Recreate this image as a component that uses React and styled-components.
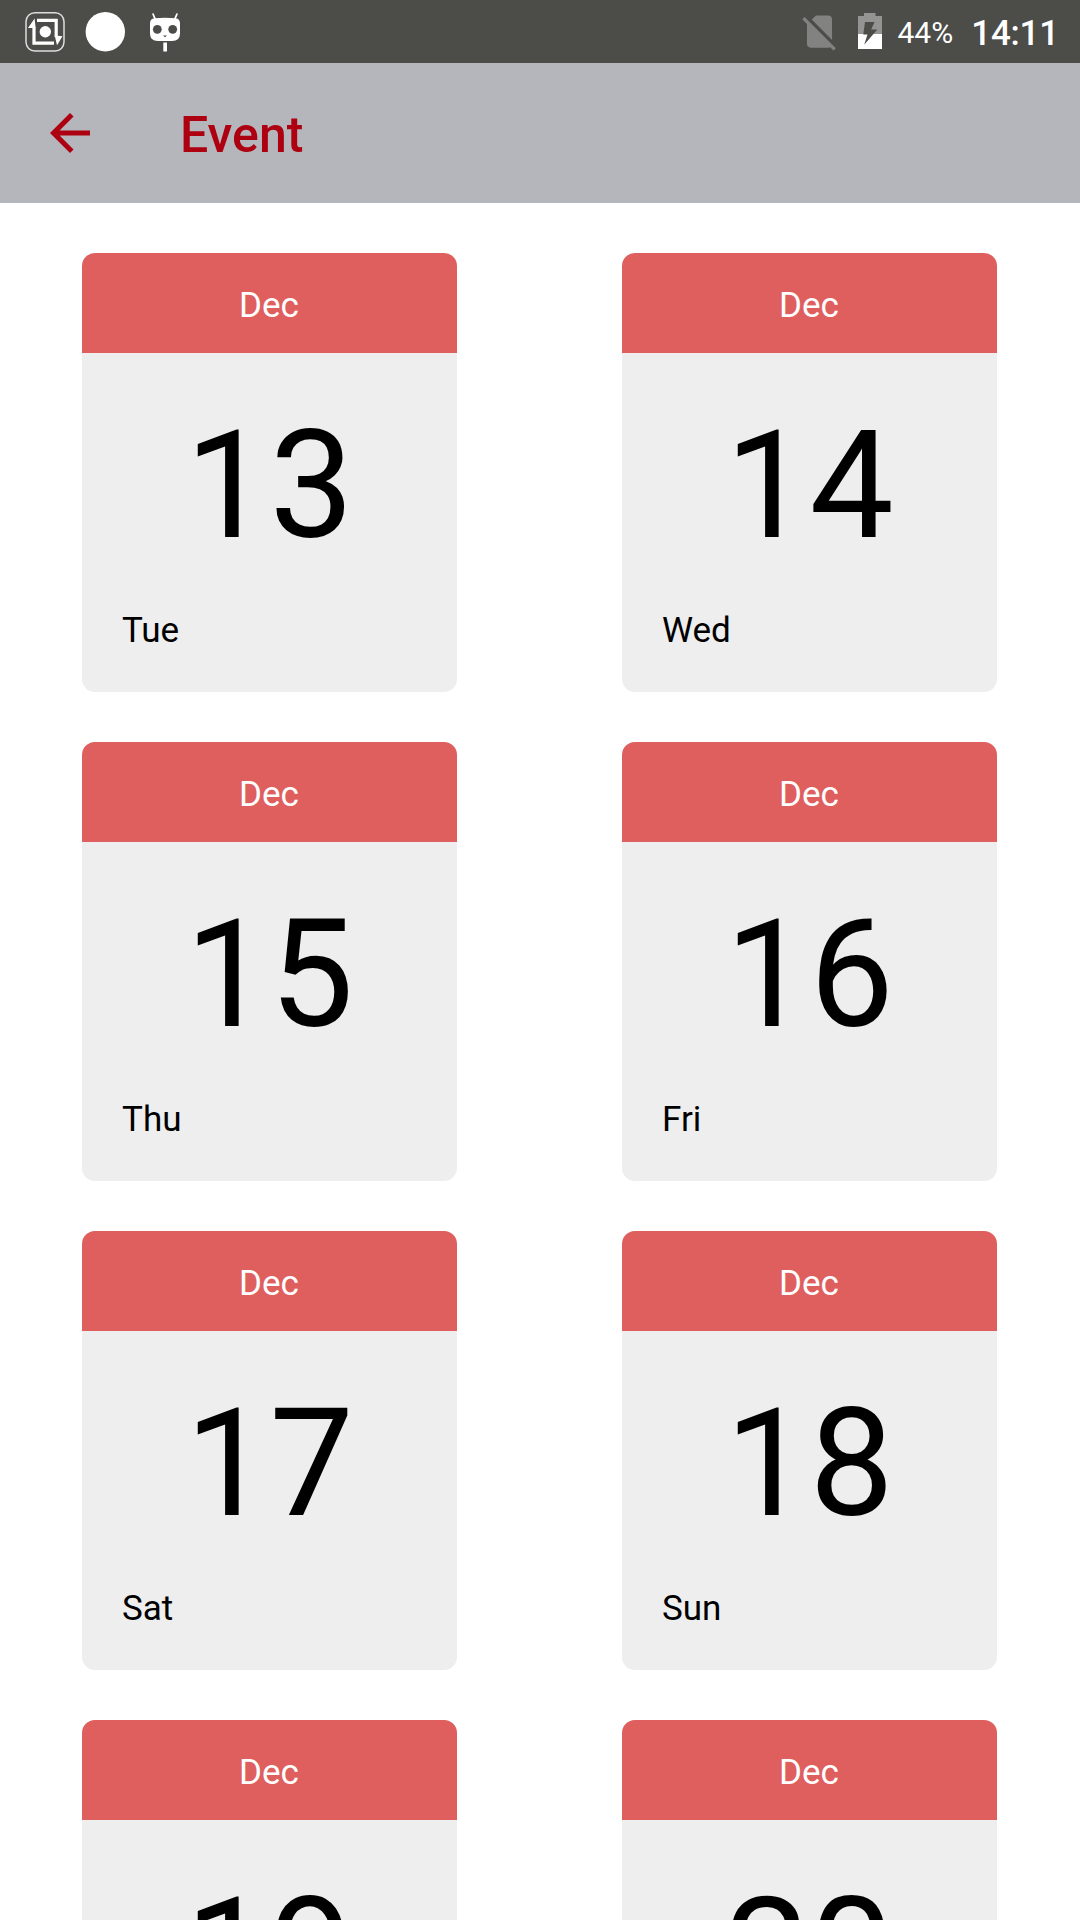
/* eslint-disable react/prop-types */
import styled, { createGlobalStyle } from "styled-components";

const GlobalStyles = createGlobalStyle`
  *,
  *::before,
  *::after {
    box-sizing: border-box;
    margin: 0;
    padding: 0;
  }

  body {
    font-family: Roboto, sans-serif;
    background-color: #fff;
    color: #000;
  }
`;

const Screen = styled.div`
  display: flex;
  flex-direction: column;
  width: 1080px;
  height: 1920px;
  overflow: hidden;
`;

const StatusBar = styled.div`
  display: flex;
  justify-content: space-between;
  flex-shrink: 0;
  height: 63px;
  padding: 0 21px 0 25px;
  background-color: #4c4c49;
  color: #fff;
`;

const StatusGroup = styled.div`
  display: flex;
  align-items: center;
`;

const StatusIcon = styled.svg`
  display: block;
  flex-shrink: 0;
  margin-right: ${(props) => props.$gap}px;
`;

const BatteryLevel = styled.span`
  margin-right: 18px;
  padding-top: 2px;
  font-size: 30px;
  line-height: 36px;
`;

const Clock = styled.span`
  padding-top: 4px;
  font-size: 35px;
  font-weight: 500;
  line-height: 42px;
  letter-spacing: -0.2px;
`;

const AppBar = styled.header`
  display: flex;
  align-items: center;
  flex-shrink: 0;
  height: 140px;
  padding-left: 40px;
  background-color: #b5b6bb;
  color: #ad0011;
`;

const BackButton = styled.button`
  display: flex;
  width: 140px;
  border: none;
  background: none;
  color: inherit;
`;

const Title = styled.h1`
  padding-top: 3px;
  font-size: 50px;
  font-weight: 500;
  line-height: 60px;
`;

const EventGrid = styled.main`
  display: grid;
  grid-template-columns: 375px 375px;
  column-gap: 165px;
  row-gap: 50px;
  padding: 50px 82px;
`;

const Card = styled.article`
  height: 439px;
  border-radius: 13px;
  background-color: #eee;
  overflow: hidden;
`;

const Month = styled.div`
  height: 100px;
  padding: 2px 1px 0 0;
  background-color: #df5e5e;
  color: #fff;
  font-size: 35px;
  line-height: 102px;
  text-align: center;
`;

const Day = styled.div`
  height: 261px;
  font-size: 150px;
  line-height: 266px;
  text-align: center;
`;

const Weekday = styled.div`
  padding-left: 40px;
  font-size: 35px;
  line-height: 34px;
`;

const events = [
  { month: "Dec", day: 13, weekday: "Tue" },
  { month: "Dec", day: 14, weekday: "Wed" },
  { month: "Dec", day: 15, weekday: "Thu" },
  { month: "Dec", day: 16, weekday: "Fri" },
  { month: "Dec", day: 17, weekday: "Sat" },
  { month: "Dec", day: 18, weekday: "Sun" },
  { month: "Dec", day: 19, weekday: "Mon" },
  { month: "Dec", day: 20, weekday: "Tue" },
];

function RotationIcon() {
  return (
    <StatusIcon width="40" height="63" viewBox="25 0 40 63" fill="none" $gap={20}>
      <rect x="26" y="12.7" width="38" height="38.4" rx="9" stroke="#ddd" strokeWidth="1.5" />
      <path d="M37 20.4H56.2V37M54 43.1H34V27" stroke="#fff" strokeWidth="3.2" />
      <path d="M28 28L34.6 18.6L35.6 28ZM54.7 35.5L62.5 36.3L57 45.2Z" fill="#fff" />
      <circle cx="45.3" cy="31.8" r="5.7" fill="#fff" />
    </StatusIcon>
  );
}

function CircleIcon() {
  return (
    <StatusIcon width="40" height="63" viewBox="85 0 40 63" $gap={25}>
      <circle cx="105.3" cy="31.8" r="19.7" fill="#fff" />
    </StatusIcon>
  );
}

function CyanogenIcon() {
  return (
    <StatusIcon width="30" height="63" viewBox="150 0 30 63" fill="#fff" $gap={0}>
      <path d="M152.8 13.5L155.6 20M177.2 13.5L174.4 20" stroke="#fff" strokeWidth="1.8" />
      <path d="M154.5 18.2Q165 17.2 175.5 18.2Q180 18.8 180 23.5V33.5Q180 41 172 41H158Q150 41 150 33.5V23.5Q150 18.8 154.5 18.2Z" />
      <circle cx="157.3" cy="29.3" r="4.4" fill="#4c4c49" />
      <circle cx="172.7" cy="29.3" r="4.4" fill="#4c4c49" />
      <path d="M163 35.5H167L165 37.3Z" fill="#4c4c49" />
      <path d="M163.3 42.5H167V51.5H163.3Z" />
    </StatusIcon>
  );
}

function NoSimIcon() {
  return (
    <StatusIcon width="43" height="43" viewBox="0 0 24 24" fill="#828280" $gap={17}>
      <path d="M18.99 5c0-1.1-.89-2-1.99-2h-7L7.66 5.34 19 16.68 18.99 5zM3.65 3.88L2.38 5.15 5 7.77V19c0 1.1.9 2 2 2h10.01c.35 0 .67-.1.96-.26l1.88 1.88 1.27-1.27L3.65 3.88z" />
    </StatusIcon>
  );
}

function BatteryIcon() {
  return (
    <StatusIcon width="24" height="63" viewBox="858 0 24 63" $gap={15}>
      <path d="M864 13H875.5V16H882V34H858V16H864Z" fill="#949492" />
      <path d="M858 34H882V49H858Z" fill="#fff" />
      <path d="M865 22H874.5L871.2 29.5H877.3L864.2 44.8L867.5 34.5H863.3Z" fill="#4c4c49" />
    </StatusIcon>
  );
}

function BackIcon() {
  return (
    <svg width="60" height="60" viewBox="0 0 24 24" fill="currentColor">
      <path d="M20 11H7.83l5.59-5.59L12 4l-8 8 8 8 1.41-1.41L7.83 13H20v-2z" />
    </svg>
  );
}

function EventCard({ event }) {
  const { month, day, weekday } = event;

  return (
    <Card>
      <Month>{month}</Month>
      <Day>{day}</Day>
      <Weekday>{weekday}</Weekday>
    </Card>
  );
}

function App() {
  return (
    <>
      <GlobalStyles />
      <Screen>
        <StatusBar>
          <StatusGroup>
            <RotationIcon />
            <CircleIcon />
            <CyanogenIcon />
          </StatusGroup>
          <StatusGroup>
            <NoSimIcon />
            <BatteryIcon />
            <BatteryLevel>44%</BatteryLevel>
            <Clock>14:11</Clock>
          </StatusGroup>
        </StatusBar>

        <AppBar>
          <BackButton aria-label="Back">
            <BackIcon />
          </BackButton>
          <Title>Event</Title>
        </AppBar>

        <EventGrid>
          {events.map((event) => (
            <EventCard event={event} key={event.day} />
          ))}
        </EventGrid>
      </Screen>
    </>
  );
}

export default App;
